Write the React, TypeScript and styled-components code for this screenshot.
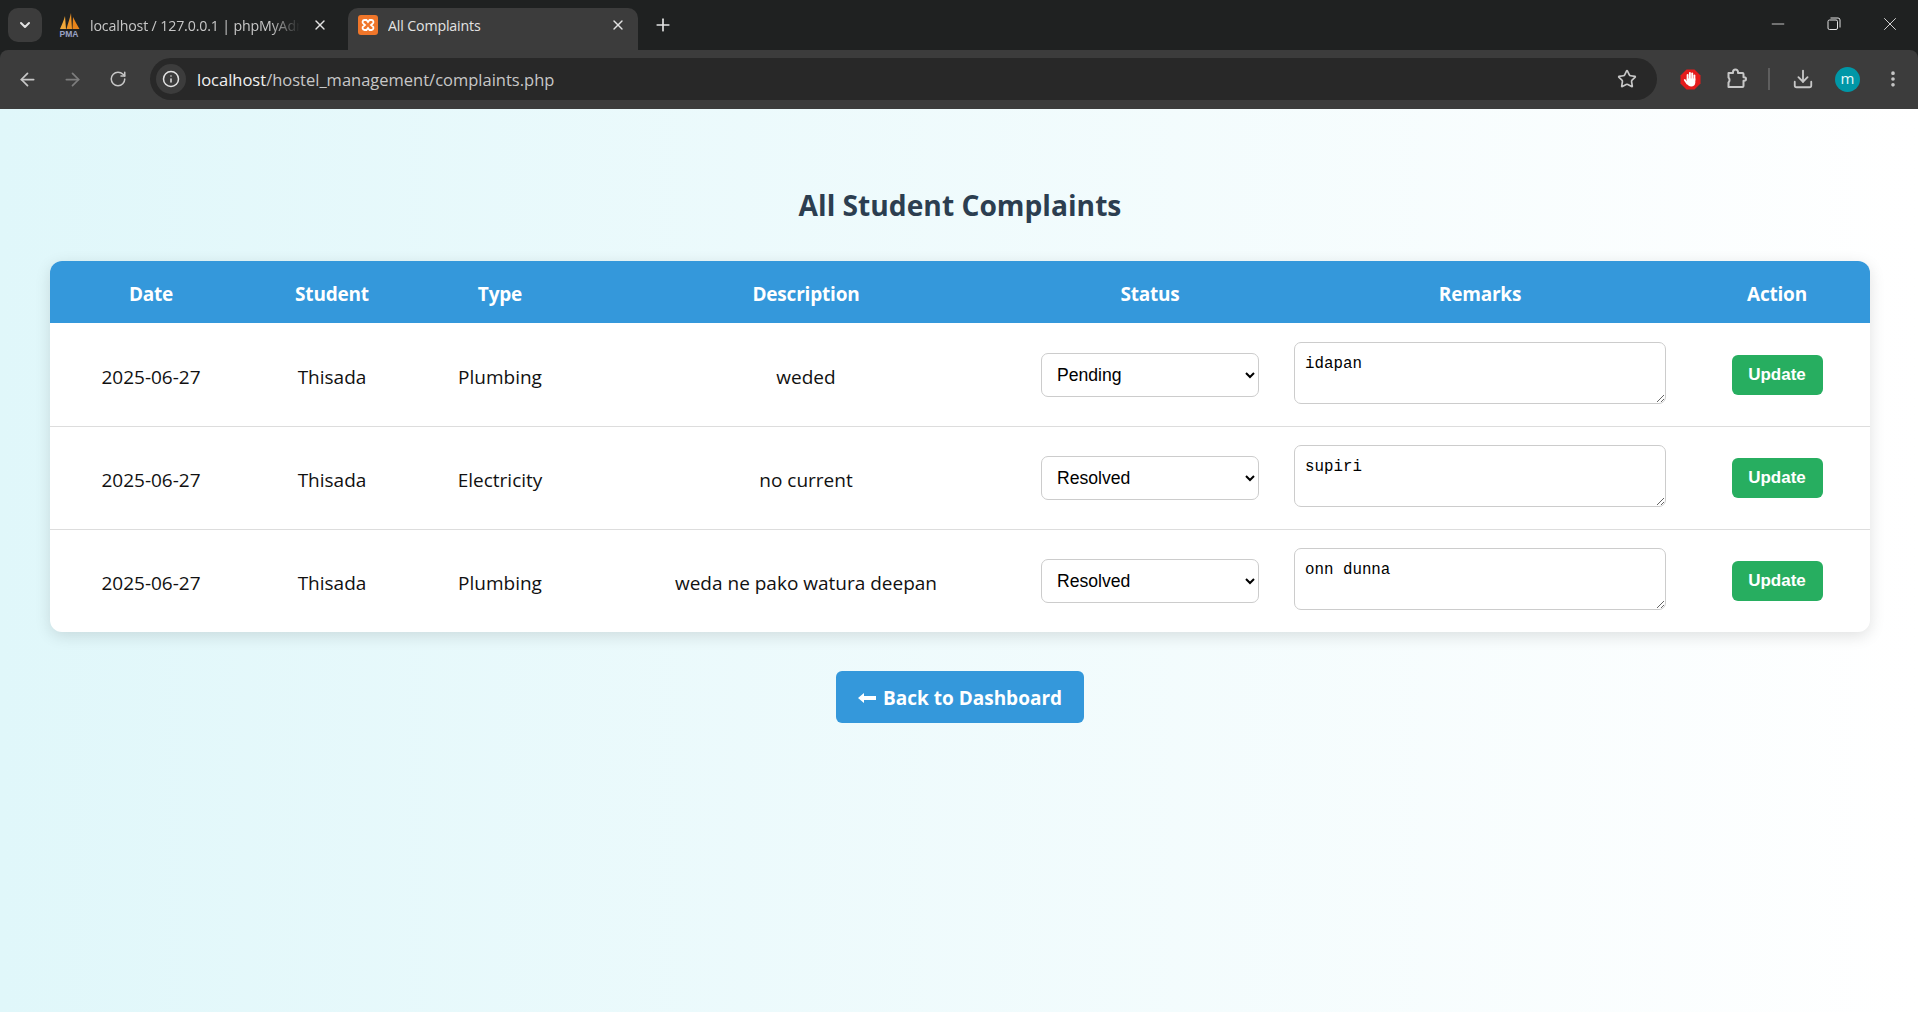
import React from 'react';
import styled, {createGlobalStyle} from 'styled-components';
import {
	ArrowLeft,
	ArrowRight,
	ChevronDown,
	Download,
	EllipsisVertical,
	Info,
	Minus,
	Plus,
	RotateCw,
	Star,
	X,
} from 'lucide-react';

const UI_FONT = `"Open Sans", "Noto Sans", sans-serif`;

const GlobalStyle = createGlobalStyle`
	html, body {
		margin: 0;
		padding: 0;
		height: 100%;
		overflow: hidden;
	}
	* {
		box-sizing: border-box;
	}
`;

const Shell = styled.div`
	display: flex;
	flex-direction: column;
	height: 1012px;
	font-family: ${UI_FONT};
`;

const TabStrip = styled.div`
	display: flex;
	align-items: flex-end;
	height: 50px;
	flex: none;
	background: #1f2121;
	padding-left: 8px;
	color: #e3e3e3;
`;

const TabListButton = styled.div`
	display: flex;
	align-items: center;
	justify-content: center;
	width: 34px;
	height: 34px;
	margin-bottom: 8px;
	border-radius: 10px;
	background: #3c3c3c;
	color: #e3e3e3;
`;

const Tab = styled.div<{$active?: boolean}>`
	display: flex;
	align-items: center;
	width: ${p => (p.$active ? '290px' : '296px')};
	height: 42px;
	padding: 0 ${p => (p.$active ? '12px' : '16px')} 8px ${p => (p.$active ? '10px' : '9px')};
	margin-left: ${p => (p.$active ? '4px' : '6px')};
	border-radius: 10px 10px 0 0;
	background: ${p => (p.$active ? '#3c3c3c' : 'transparent')};
`;

const TabTitle = styled.span<{$fade?: boolean}>`
	flex: 1;
	margin-left: ${p => (p.$fade ? '9px' : '10px')};
	margin-right: ${p => (p.$fade ? '12px' : '0')};
	font-size: 14.2px;
	letter-spacing: -0.15px;
	white-space: nowrap;
	overflow: hidden;
	color: ${p => (p.$fade ? '#c7c7c7' : '#e3e3e3')};
	${p =>
		p.$fade &&
		'mask-image: linear-gradient(to right, #000 86%, transparent 100%);'}
`;

const NewTab = styled.div`
	display: flex;
	align-items: center;
	justify-content: center;
	width: 32px;
	height: 42px;
	margin-left: 9px;
	padding-bottom: 8px;
`;

const Spacer = styled.div`
	flex: 1;
`;

const WindowButton = styled.div`
	display: flex;
	align-items: center;
	justify-content: center;
	width: 56px;
	height: 50px;
	padding-bottom: 2px;
`;

const Toolbar = styled.div`
	display: flex;
	align-items: center;
	flex: none;
	height: 59px;
	padding: 0 3px 1px 5px;
	border-radius: 8px 8px 0 0;
	background: #3c3c3c;
	color: #c7c7c7;
`;

const ToolbarArea = styled.div`
	background: #1f2121;
	flex: none;
`;

const NavButton = styled.div<{$dim?: boolean}>`
	display: flex;
	align-items: center;
	justify-content: center;
	width: 45px;
	height: 40px;
	color: ${p => (p.$dim ? '#7d7d7d' : '#c7c7c7')};
`;

const AddressBar = styled.div`
	display: flex;
	align-items: center;
	flex: 1;
	height: 42px;
	margin: 0 11px 0 10px;
	padding: 0 20px 0 6px;
	border-radius: 21px;
	background: #282828;
`;

const InfoChip = styled.div`
	display: flex;
	align-items: center;
	justify-content: center;
	width: 30px;
	height: 30px;
	border-radius: 50%;
	background: #3c3c3c;
	color: #e3e3e3;
`;

const Url = styled.div`
	flex: 1;
	margin-left: 11px;
	font-size: 16.5px;
	color: #c7c7c7;

	b {
		font-weight: 400;
		color: #f1f1f1;
	}
`;

const ToolSlot = styled.div`
	display: flex;
	align-items: center;
	justify-content: center;
	width: 45px;
	height: 40px;
`;

const ToolDivider = styled.div`
	width: 2px;
	height: 22px;
	margin: 0 10px;
	background: #5e5e5e;
`;

const Avatar = styled.div`
	display: flex;
	align-items: center;
	justify-content: center;
	width: 25px;
	height: 25px;
	padding-bottom: 3px;
	border-radius: 50%;
	background: #0097a7;
	color: #e8f7f9;
	font-size: 15px;
`;

const Page = styled.main`
	display: flex;
	flex-direction: column;
	align-items: center;
	flex: 1;
	padding: 77px 48px 0 50px;
	background: linear-gradient(to right, #e0f7fa, #ffffff);
`;

const Title = styled.h2`
	margin: 0 0 37px;
	font-size: 28.2px;
	line-height: 38px;
	font-weight: 700;
	color: #2c3e50;
`;

const TableCard = styled.div`
	width: 100%;
	border-radius: 12px;
	overflow: hidden;
	background: #fff;
	box-shadow: 0 4px 16px rgba(0, 0, 0, 0.12);
`;

const Table = styled.table`
	width: 100%;
	table-layout: fixed;
	border-collapse: collapse;
`;

const HeadCell = styled.th`
	height: 62px;
	padding: 4px 0 0;
	background: #3498db;
	color: #fff;
	font-size: 19px;
	font-weight: 700;
	letter-spacing: -0.2px;
	text-align: center;
`;

const Row = styled.tr`
	height: 103px;
	border-bottom: 1px solid #ddd;

	&:last-child {
		border-bottom: 0;
	}
`;

const Cell = styled.td`
	padding: 5px 0 0;
	font-size: 19px;
	text-align: center;
	color: #111;
`;

const ControlCell = styled.td`
	padding: 1px 0 0;
	text-align: center;
`;

const StatusSelect = styled.select`
	display: block;
	width: 218px;
	height: 44px;
	margin: 0 auto;
	padding: 0 0 0 11px;
	border: 1px solid #ccc;
	border-radius: 7px;
	background: #fff;
	color: #000;
	font-family: "Liberation Sans", Arial, sans-serif;
	font-size: 17.6px;
`;

const RemarksBox = styled.textarea`
	display: block;
	width: 372px;
	height: 62px;
	margin: 0 auto 4px;
	padding: 12px 10px 8px;
	border: 1px solid #ccc;
	border-radius: 7px;
	background: #fff;
	color: #000;
	font-family: "Liberation Mono", monospace;
	font-size: 15.8px;
	line-height: 18px;
`;

const UpdateButton = styled.button`
	display: inline-block;
	width: 91px;
	height: 40px;
	padding: 0;
	border: 0;
	border-radius: 6px;
	background: #27ae60;
	color: #fff;
	font-family: "Liberation Sans", Arial, sans-serif;
	font-size: 17px;
	font-weight: 700;
`;

const BackLink = styled.a`
	display: flex;
	align-items: center;
	justify-content: center;
	gap: 7px;
	width: 248px;
	height: 52px;
	margin-top: 39px;
	padding-top: 1px;
	border-radius: 6px;
	background: #3498db;
	color: #fff;
	font-size: 19px;
	font-weight: 700;
	text-decoration: none;
`;

const COLUMNS: [string, number][] = [
	['Date', 202],
	['Student', 160],
	['Type', 176],
	['Description', 436],
	['Status', 252],
	['Remarks', 408],
	['Action', 186],
];

const COMPLAINTS = [
	{type: 'Plumbing', description: 'weded', status: 'Pending', remarks: 'idapan'},
	{type: 'Electricity', description: 'no current', status: 'Resolved', remarks: 'supiri'},
	{
		type: 'Plumbing',
		description: 'weda ne pako watura deepan',
		status: 'Resolved',
		remarks: 'onn dunna',
	},
];

const PmaLogo = () => (
	<svg width="24" height="26" viewBox="0 0 24 26">
		<path d="M3 17 C5 12 7 8 8 4 L9 17 Z" fill="#f2a93a" />
		<path d="M9.5 17 C11 11 13 6 14 1 L15 17 Z" fill="#ee9426" />
		<path d="M15.5 17 L16 5 C18 9 20 13 22.5 17 Z" fill="#e8841a" />
		<text x="12" y="24.5" textAnchor="middle" fontSize="8.5" fontWeight="700" fontFamily="Liberation Sans" fill="#9aa3c4">
			PMA
		</text>
	</svg>
);

const XamppLogo = () => (
	<svg width="20" height="20" viewBox="0 0 20 20">
		<rect width="20" height="20" rx="3" fill="#f0762a" />
		<path
			d="M6.5 5 H8.5 L10 7 L11.5 5 H13.5 A2 2 0 0 1 14.5 8.7 L13 10 L14.5 11.3 A2 2 0 0 1 13.5 15 H11.5 L10 13 L8.5 15 H6.5 A2 2 0 0 1 5.5 11.3 L7 10 L5.5 8.7 A2 2 0 0 1 6.5 5 Z"
			fill="none"
			stroke="#fff"
			strokeWidth="1.8"
		/>
	</svg>
);

const AdblockIcon = () => (
	<svg width="21" height="21" viewBox="0 0 21 21">
		<path d="M6.5 0.5 H14.5 L20.5 6.5 V14.5 L14.5 20.5 H6.5 L0.5 14.5 V6.5 Z" fill="#e41c1c" />
		<g stroke="#fff" strokeWidth="1.9" strokeLinecap="round" fill="none">
			<path d="M7.6 11 V6" />
			<path d="M9.9 10 V4" />
			<path d="M12.2 10 V4.4" />
			<path d="M14.4 11 V6.4" />
			<path d="M4.8 11 L7.4 14.6" />
		</g>
		<path d="M6.8 9.5 H15.3 V13.5 C15.3 16 13.6 17.5 11.2 17.5 C9.2 17.5 8 16.4 6.8 14.5 Z" fill="#fff" />
	</svg>
);

const ExtensionsIcon = () => (
	<svg width="22" height="22" viewBox="0 0 22 22" fill="none" stroke="#c7c7c7" strokeWidth="2" strokeLinejoin="round">
		<path d="M3.5 5 H8 V4 A2.5 2.5 0 0 1 13 4 V5 H17.5 A1 1 0 0 1 18.5 6 V9.2 H19.2 A1.8 1.8 0 0 1 19.2 12.8 H18.5 V18 A1 1 0 0 1 17.5 19 H3.5 V14.5 A3.5 3.5 0 0 0 3.5 9.5 Z" />
	</svg>
);

const RestoreIcon = () => (
	<svg width="14" height="14" viewBox="0 0 14 14" fill="none" stroke="#e3e3e3" strokeWidth="1">
		<rect x="1" y="3" width="9.5" height="9.5" rx="1.5" />
		<path d="M3.5 1 H11 A2 2 0 0 1 13 3 V10.5" />
	</svg>
);

const BackArrow = () => (
	<svg width="18" height="12" viewBox="0 0 18 12">
		<path d="M0 6 L6 1 V4 H18 V8 H6 V11 Z" fill="#fff" />
	</svg>
);

const BrowserChrome = () => (
	<>
		<TabStrip>
			<TabListButton>
				<ChevronDown size={16} strokeWidth={3} />
			</TabListButton>
			<Tab>
				<PmaLogo />
				<TabTitle $fade>localhost / 127.0.0.1 | phpMyAdmin</TabTitle>
				<X size={16} strokeWidth={2} />
			</Tab>
			<Tab $active>
				<XamppLogo />
				<TabTitle>All Complaints</TabTitle>
				<X size={16} strokeWidth={2} />
			</Tab>
			<NewTab>
				<Plus size={20} strokeWidth={2} />
			</NewTab>
			<Spacer />
			<WindowButton>
				<Minus size={20} strokeWidth={1} />
			</WindowButton>
			<WindowButton>
				<RestoreIcon />
			</WindowButton>
			<WindowButton>
				<X size={22} strokeWidth={1} />
			</WindowButton>
		</TabStrip>
		<ToolbarArea>
			<Toolbar>
				<NavButton>
					<ArrowLeft size={21} strokeWidth={2} />
				</NavButton>
				<NavButton $dim>
					<ArrowRight size={21} strokeWidth={2} />
				</NavButton>
				<NavButton>
					<RotateCw size={18} strokeWidth={2} />
				</NavButton>
				<AddressBar>
					<InfoChip>
						<Info size={18} strokeWidth={2} />
					</InfoChip>
					<Url>
						<b>localhost</b>/hostel_management/complaints.php
					</Url>
					<Star size={20} strokeWidth={2} />
				</AddressBar>
				<ToolSlot>
					<AdblockIcon />
				</ToolSlot>
				<ToolSlot>
					<ExtensionsIcon />
				</ToolSlot>
				<ToolDivider />
				<ToolSlot>
					<Download size={22} strokeWidth={2} />
				</ToolSlot>
				<ToolSlot>
					<Avatar>m</Avatar>
				</ToolSlot>
				<ToolSlot>
					<EllipsisVertical size={20} strokeWidth={2.4} />
				</ToolSlot>
			</Toolbar>
		</ToolbarArea>
	</>
);

const App = () => (
	<Shell>
		<GlobalStyle />
		<BrowserChrome />
		<Page>
			<Title>All Student Complaints</Title>
			<TableCard>
				<Table>
					<colgroup>
						{COLUMNS.map(([name, width]) => (
							<col key={name} width={width} />
						))}
					</colgroup>
					<thead>
						<tr>
							{COLUMNS.map(([name]) => (
								<HeadCell key={name}>{name}</HeadCell>
							))}
						</tr>
					</thead>
					<tbody>
						{COMPLAINTS.map(c => (
							<Row key={c.remarks}>
								<Cell>2025-06-27</Cell>
								<Cell>Thisada</Cell>
								<Cell>{c.type}</Cell>
								<Cell>{c.description}</Cell>
								<ControlCell>
									<StatusSelect defaultValue={c.status}>
										<option>Pending</option>
										<option>In Progress</option>
										<option>Resolved</option>
									</StatusSelect>
								</ControlCell>
								<ControlCell>
									<RemarksBox defaultValue={c.remarks} />
								</ControlCell>
								<ControlCell>
									<UpdateButton>Update</UpdateButton>
								</ControlCell>
							</Row>
						))}
					</tbody>
				</Table>
			</TableCard>
			<BackLink href="#">
				<BackArrow />
				Back to Dashboard
			</BackLink>
		</Page>
	</Shell>
);

export default App;
